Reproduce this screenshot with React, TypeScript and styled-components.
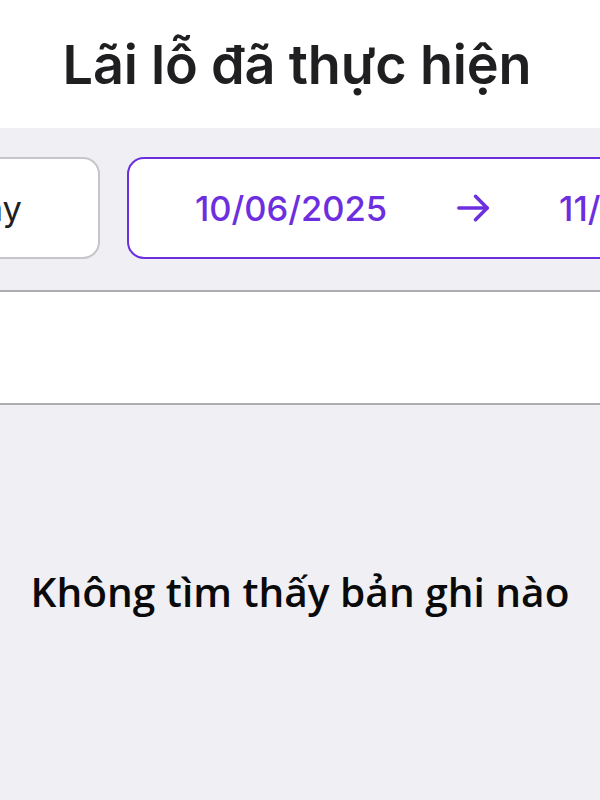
import React from 'react';
import styled, { createGlobalStyle } from 'styled-components';

const GlobalStyle = createGlobalStyle`
  html, body {
    margin: 0;
    padding: 0;
    background: #efeff4;
  }
  body {
    font-family: Inter, "Noto Sans", sans-serif;
  }
`;

const Page = styled.div`
  width: 600px;
  height: 800px;
  display: flex;
  flex-direction: column;
  overflow: hidden;
  background: #efeff4;
`;

const Header = styled.header`
  height: 128px;
  display: flex;
  align-items: center;
  justify-content: center;
  background: #fff;
`;

const Title = styled.h1`
  margin: 0;
  font-family: Inter, sans-serif;
  font-size: 54px;
  font-weight: 600;
  color: #1f1f21;
  letter-spacing: -0.2px;
  transform: translateX(-3px);
`;

const FilterBar = styled.div`
  padding: 29px 0 31px;
  background: #efeff4;
  border-bottom: 2px solid #adadb0;
  overflow: hidden;
`;

const FilterRow = styled.div`
  display: flex;
  gap: 27px;
  margin-left: -191px;
  width: max-content;
`;

const Pill = styled.div<{ $active?: boolean }>`
  height: 102px;
  box-sizing: border-box;
  display: flex;
  align-items: center;
  gap: 66px;
  padding: ${(p) => (p.$active ? '0 66px 0 66px' : '0 76px 0 66px')};
  background: #fff;
  border: 2px solid ${(p) => (p.$active ? '#6d2ee0' : '#c6c6ca')};
  border-radius: 17px;
  font-size: 34.5px;
  font-weight: ${(p) => (p.$active ? 500 : 400)};
  color: ${(p) => (p.$active ? '#6d2ee0' : '#1f1f21')};
  white-space: nowrap;
`;

const Arrow = styled.svg`
  width: 40px;
  height: 40px;
  flex: 0 0 auto;
`;

const Spacer = styled.div`
  height: 111px;
  background: #fff;
  border-bottom: 2px solid #adadb0;
`;

const Empty = styled.div`
  flex: 1;
  display: flex;
  justify-content: center;
  padding-top: 159px;
  background: #efeff4;
`;

const EmptyText = styled.span`
  font-family: "Open Sans", sans-serif;
  font-size: 40.6px;
  font-weight: 600;
  color: #0a0a0a;
`;

export default function App() {
  return (
    <>
      <GlobalStyle />
      <Page>
        <Header>
          <Title>Lãi lỗ đã thực hiện</Title>
        </Header>
        <FilterBar>
          <FilterRow>
            <Pill>Hôm nay</Pill>
            <Pill $active>
              <span>10/06/2025</span>
              <Arrow viewBox="0 0 24 24" fill="none" stroke="currentColor" strokeWidth="2.1" strokeLinecap="round" strokeLinejoin="round">
                <path d="M3.5 12h17" />
                <path d="M13.5 5l7 7-7 7" />
              </Arrow>
              <span>11/06/2025</span>
            </Pill>
          </FilterRow>
        </FilterBar>
        <Spacer />
        <Empty>
          <EmptyText>Không tìm thấy bản ghi nào</EmptyText>
        </Empty>
      </Page>
    </>
  );
}
